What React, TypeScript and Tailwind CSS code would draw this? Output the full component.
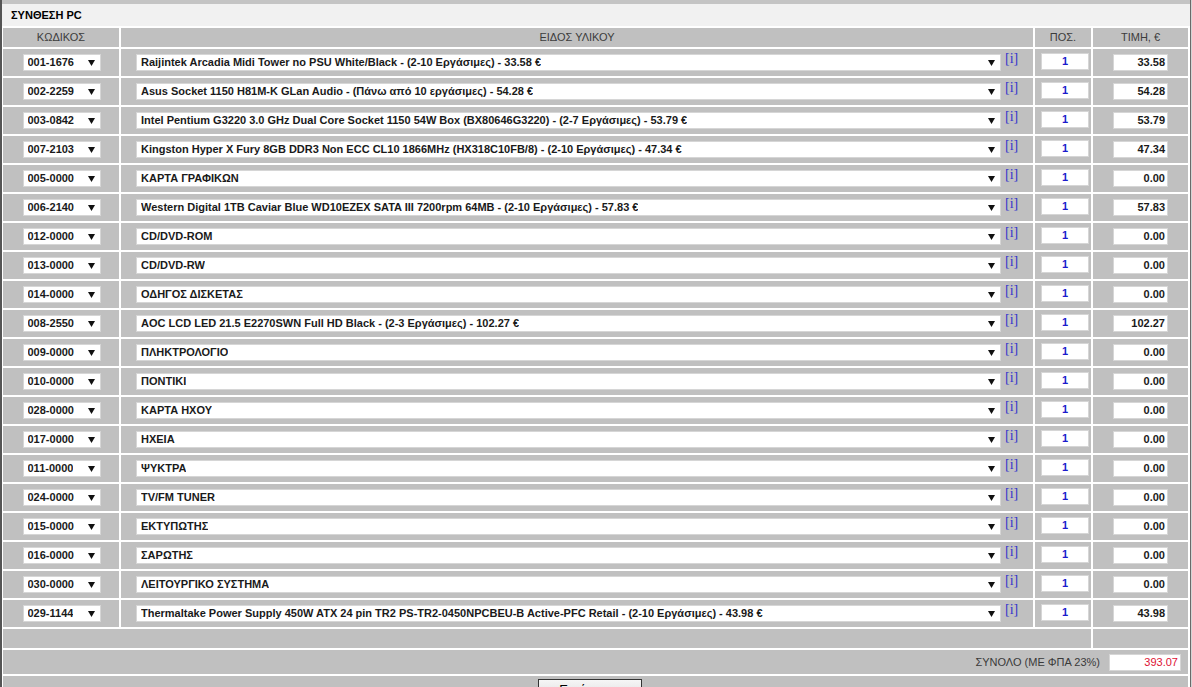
const rows: { code: string; name: string; price: string }[] = [
  { code: '001-1676', name: 'Raijintek Arcadia Midi Tower no PSU White/Black - (2-10 Εργάσιμες) - 33.58 €', price: '33.58' },
  { code: '002-2259', name: 'Asus Socket 1150 H81M-K GLan Audio - (Πάνω από 10 εργάσιμες) - 54.28 €', price: '54.28' },
  { code: '003-0842', name: 'Intel Pentium G3220 3.0 GHz Dual Core Socket 1150 54W Box (BX80646G3220) - (2-7 Εργάσιμες) - 53.79 €', price: '53.79' },
  { code: '007-2103', name: 'Kingston Hyper X Fury 8GB DDR3 Non ECC CL10 1866MHz (HX318C10FB/8) - (2-10 Εργάσιμες) - 47.34 €', price: '47.34' },
  { code: '005-0000', name: 'ΚΑΡΤΑ ΓΡΑΦΙΚΩΝ', price: '0.00' },
  { code: '006-2140', name: 'Western Digital 1TB Caviar Blue WD10EZEX SATA III 7200rpm 64MB - (2-10 Εργάσιμες) - 57.83 €', price: '57.83' },
  { code: '012-0000', name: 'CD/DVD-ROM', price: '0.00' },
  { code: '013-0000', name: 'CD/DVD-RW', price: '0.00' },
  { code: '014-0000', name: 'ΟΔΗΓΟΣ ΔΙΣΚΕΤΑΣ', price: '0.00' },
  { code: '008-2550', name: 'AOC LCD LED 21.5 E2270SWN Full HD Black - (2-3 Εργάσιμες) - 102.27 €', price: '102.27' },
  { code: '009-0000', name: 'ΠΛΗΚΤΡΟΛΟΓΙΟ', price: '0.00' },
  { code: '010-0000', name: 'ΠΟΝΤΙΚΙ', price: '0.00' },
  { code: '028-0000', name: 'ΚΑΡΤΑ ΗΧΟΥ', price: '0.00' },
  { code: '017-0000', name: 'ΗΧΕΙΑ', price: '0.00' },
  { code: '011-0000', name: 'ΨΥΚΤΡΑ', price: '0.00' },
  { code: '024-0000', name: 'TV/FM TUNER', price: '0.00' },
  { code: '015-0000', name: 'ΕΚΤΥΠΩΤΗΣ', price: '0.00' },
  { code: '016-0000', name: 'ΣΑΡΩΤΗΣ', price: '0.00' },
  { code: '030-0000', name: 'ΛΕΙΤΟΥΡΓΙΚΟ ΣΥΣΤΗΜΑ', price: '0.00' },
  { code: '029-1144', name: 'Thermaltake Power Supply 450W ATX 24 pin TR2 PS-TR2-0450NPCBEU-B Active-PFC Retail - (2-10 Εργάσιμες) - 43.98 €', price: '43.98' },
];

// small black triangle used by the fake selects
const Arrow = () => (
  <svg width="7" height="7" viewBox="0 0 7 7" className="shrink-0">
    <polygon points="0,1 7,1 3.5,7" fill="#111" />
  </svg>
);

const FakeSelect = ({ text, width }: { text: string; width: string }) => (
  <div className={`flex h-[17px] ${width} items-center justify-between border border-[#d6d6d6] bg-white pl-[4px] pr-[5px]`}>
    <span className="truncate">{text}</span>
    <Arrow />
  </div>
);

const App = () => {
  return (
    <div className="h-[687px] w-[1192px] overflow-hidden bg-[#d4d4d4] font-['Liberation_Sans',Arial,sans-serif] text-[11px] text-[#1a1a1a]">
      <div className="h-full w-[1191px] border-l-2 border-r border-l-[#555] border-r-[#6a6a6a] bg-[#c4c4c4] pt-[4px]">
        {/* Title */}
        <div className="flex h-[22px] items-center bg-[#f1f1f1] pl-[9px] font-bold text-black">
          ΣΥΝΘΕΣΗ PC
        </div>

        <div className="grid grid-cols-[116px_912px_56px_95px] gap-[2px] bg-white pl-[1px] pt-[2px]">
          {/* Header */}
          {['ΚΩΔΙΚΟΣ', 'ΕΙΔΟΣ ΥΛΙΚΟΥ', 'ΠΟΣ.', 'ΤΙΜΗ, €'].map((h) => (
            <div key={h} className="flex h-[19px] items-center justify-center bg-[#c0c0c0] text-[#3c3c3c]">
              {h}
            </div>
          ))}

          {/* Items */}
          {rows.map((r) => (
            <div key={r.code} className="contents font-bold">
              <div className="flex h-[27px] items-center justify-center bg-[#c0c0c0] pl-[1px]">
                <FakeSelect text={r.code} width="w-[78px]" />
              </div>
              <div className="flex h-[27px] items-center bg-[#c0c0c0] pl-[15px]">
                <FakeSelect text={r.name} width="w-[865px]" />
                <span className="relative -top-[4px] ml-[4px] font-['Liberation_Serif',serif] text-[14px] font-normal text-[#3535cc]">
                  [i]
                </span>
              </div>
              <div className="flex h-[27px] items-center bg-[#c0c0c0] pl-[6px]">
                <div className="relative -top-[1px] flex h-[17px] w-[48px] items-center justify-center border border-[#d6d6d6] bg-white text-[#1a1acc]">
                  1
                </div>
              </div>
              <div className="flex h-[27px] items-center justify-center bg-[#c0c0c0]">
                <div className="flex h-[17px] w-[55px] items-center justify-end border border-[#d6d6d6] bg-white pr-[2px]">
                  {r.price}
                </div>
              </div>
            </div>
          ))}

          {/* Empty row */}
          <div className="col-span-3 h-[19px] bg-[#c0c0c0]" />
          <div className="h-[19px] bg-[#c0c0c0]" />

          {/* Total */}
          <div className="col-span-4 flex h-[24px] items-center justify-end bg-[#c0c0c0] pr-[7px]">
            <span className="mr-[9px] text-[#3a3a3a]">ΣΥΝΟΛΟ (ΜΕ ΦΠΑ 23%)</span>
            <div className="flex h-[17px] w-[72px] items-center justify-end border border-[#d6d6d6] bg-white pr-[2px] text-[#dd1133]">
              393.07
            </div>
          </div>

          {/* Print button */}
          <div className="col-span-4 flex h-[30px] justify-center bg-[#c0c0c0] pr-[11px] pt-[3px]">
            <button className="h-[22px] w-[104px] border border-[#333] bg-gradient-to-b from-[#f6f6f6] to-[#dcdcdc] text-[13px] text-black">
              Εκτύπωση
            </button>
          </div>
        </div>
      </div>
    </div>
  );
};

export default App;
